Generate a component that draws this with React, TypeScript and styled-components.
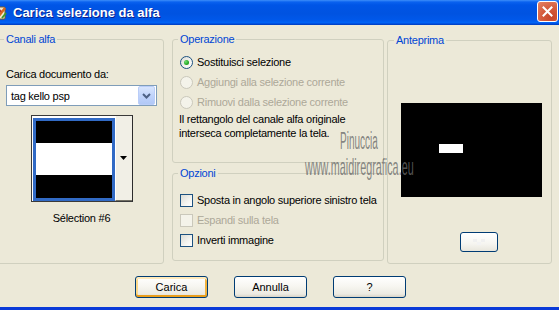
import React from "react";
import styled, { createGlobalStyle } from "styled-components";

const GlobalStyle = createGlobalStyle`
  html, body {
    margin: 0;
    padding: 0;
    background: #ece9d8;
  }
`;

const Window = styled.div`
  position: relative;
  width: 559px;
  height: 310px;
  box-sizing: border-box;
  overflow: hidden;
  display: flex;
  flex-direction: column;
  background: #ece9d8;
  border-bottom: 3px solid #0a3ad8;
  font-family: "Liberation Sans", Arial, sans-serif;
  font-size: 11px;
  letter-spacing: -0.25px;
  color: #000;
`;

const TitleBar = styled.div`
  flex: none;
  height: 25px;
  display: flex;
  align-items: center;
  background: linear-gradient(
    to bottom,
    #3d8ef9 0%,
    #0a62ef 8%,
    #0055e6 20%,
    #0053e1 55%,
    #0058ea 80%,
    #0063f5 90%,
    #004bd8 96%,
    #003ab8 100%
  );
  color: #fff;
`;

const TitleIcon = styled.svg`
  flex: none;
  margin-left: -7px;
  margin-top: 1px;
`;

const TitleText = styled.span`
  flex: 1;
  margin-left: 4px;
  font-weight: bold;
  font-size: 13px;
  letter-spacing: 0;
  text-shadow: 1px 1px 0 #0a1f8c;
`;

const CloseButton = styled.div`
  flex: none;
  align-self: flex-start;
  margin: 1px 1px 0 0;
  width: 21px;
  height: 21px;
  box-sizing: border-box;
  border: 1px solid #fff;
  border-radius: 3px;
  background: radial-gradient(circle at 70% 80%, #c6452a 0%, #d45b3c 45%, #e58466 100%);
  display: flex;
  align-items: center;
  justify-content: center;
`;

const Panels = styled.div`
  display: flex;
  align-items: flex-start;
  padding-top: 8px;
  margin-left: -3px;
`;

const Column = styled.div<{ $gap: number }>`
  display: flex;
  flex-direction: column;
  gap: ${(p) => p.$gap}px;
`;

const Group = styled.fieldset<{ $w: number; $h: number; $pl?: number; $top?: number }>`
  box-sizing: border-box;
  flex: none;
  width: ${(p) => p.$w}px;
  height: ${(p) => p.$h}px;
  min-width: 0;
  margin: ${(p) => p.$top ?? 0}px 0 0 0;
  padding: 0 0 0 ${(p) => p.$pl ?? 7}px;
  border: 1px solid #d0d0bf;
  border-radius: 3px;
`;

const Legend = styled.legend<{ $shift?: number }>`
  height: 13px;
  line-height: 13px;
  padding: 0 2px;
  margin-left: ${(p) => p.$shift ?? -2}px;
  color: #0046d5;
`;

const Spacer = styled.div<{ $h: number }>`
  height: ${(p) => p.$h}px;
  flex: none;
`;

/* left: Canali alfa */

const LeftStack = styled.div`
  width: 151px;
  display: flex;
  flex-direction: column;
  align-items: center;
`;

const FieldLabel = styled.div`
  align-self: flex-start;
  line-height: 13px;
  margin-bottom: 4px;
`;

const Combo = styled.div`
  width: 151px;
  height: 21px;
  box-sizing: border-box;
  border: 1px solid #7f9db9;
  background: #fff;
  display: flex;
  align-items: center;
  padding: 0 1px 0 4px;
`;

const ComboText = styled.span`
  flex: 1;
`;

const ComboArrow = styled.div`
  width: 17px;
  height: 19px;
  box-sizing: border-box;
  border: 1px solid #bacdf8;
  border-radius: 2px;
  background: linear-gradient(to bottom, #d8e5fd 0%, #c1d4fb 50%, #b1c8f7 100%);
  display: flex;
  align-items: center;
  justify-content: center;
`;

const Thumb = styled.div`
  margin-top: 9px;
  width: 102px;
  height: 87px;
  box-sizing: border-box;
  display: flex;
  border: 1px solid #3a3a3a;
  border-right-color: #2c2c2c;
  background: #fff;
  padding: 2px 0 0 1px;
`;

const ThumbImage = styled.div`
  width: 82px;
  height: 83px;
  box-sizing: border-box;
  border: 3px solid #316ac5;
  background: linear-gradient(
    to bottom,
    #000 0 22px,
    #fff 22px 54px,
    #000 54px 100%
  );
`;

const ThumbArrow = styled.div`
  flex: 1;
  margin-top: -2px;
  background: #f1efe6;
  border-left: 1px solid #fff;
  border-bottom: 1px solid #716f64;
  display: flex;
  align-items: center;
  justify-content: center;
`;

const Caption = styled.div`
  margin-top: 10px;
  line-height: 13px;
`;

/* middle: Operazione / Opzioni */

const OptionRow = styled.div<{ $disabled?: boolean }>`
  height: 20px;
  display: flex;
  align-items: center;
  gap: 4px;
  color: ${(p) => (p.$disabled ? "#aca899" : "#000")};
`;

const Radio = styled.span<{ $checked?: boolean; $disabled?: boolean }>`
  flex: none;
  width: 13px;
  height: 13px;
  box-sizing: border-box;
  border-radius: 50%;
  border: 1px solid ${(p) => (p.$disabled ? "#cac8bb" : "#1c5180")};
  background: ${(p) =>
    p.$disabled ? "#f4f3ea" : "linear-gradient(135deg, #dcdcd5 0%, #f4f4f0 60%, #fff 100%)"};
  display: flex;
  align-items: center;
  justify-content: center;

  &::after {
    content: "";
    display: ${(p) => (p.$checked ? "block" : "none")};
    width: 5px;
    height: 5px;
    border-radius: 50%;
    background: radial-gradient(circle at 35% 35%, #6fe06f 0%, #25a825 60%, #178317 100%);
  }
`;

const Check = styled.span<{ $disabled?: boolean }>`
  flex: none;
  width: 13px;
  height: 13px;
  box-sizing: border-box;
  border: 1px solid ${(p) => (p.$disabled ? "#cac8bb" : "#1c5180")};
  background: ${(p) =>
    p.$disabled ? "#f4f3ea" : "linear-gradient(135deg, #dcdcd5 0%, #f4f4f0 60%, #fff 100%)"};
`;

const Description = styled.div`
  margin: 0 0 0 -1px;
  line-height: 14px;
`;

/* right: Anteprima */

const Preview = styled.div`
  width: 141px;
  height: 94px;
  box-sizing: border-box;
  background: #000;
  padding: 41px 0 0 38px;
`;

const PreviewMark = styled.div`
  width: 24px;
  height: 9px;
  background: #fff;
`;

const SmallButton = styled.div`
  margin-left: 59px;
  width: 38px;
  height: 20px;
  box-sizing: border-box;
  border: 1px solid #003c74;
  border-radius: 3px;
  background: linear-gradient(to bottom, #fff 0%, #f6f5f0 60%, #e8e6dc 100%);
  display: flex;
  align-items: center;
  justify-content: center;
`;

/* bottom buttons */

const ButtonRow = styled.div`
  display: flex;
  gap: 26px;
  padding: 12px 0 0 135px;
`;

const Button = styled.div<{ $default?: boolean }>`
  width: 73px;
  height: 22px;
  box-sizing: border-box;
  border: 1px solid #003c74;
  border-radius: 3px;
  background: linear-gradient(to bottom, #fff 0%, #f7f6f1 45%, #eceae2 85%, #d8d3c6 100%);
  box-shadow: ${(p) =>
    p.$default
      ? "inset 0 2px 0 #ffeabb, inset 0 -2px 0 #e89d1b, inset 2px 0 0 #fbd88a, inset -2px 0 0 #f2b33e"
      : "none"};
  display: flex;
  align-items: center;
  justify-content: center;
  letter-spacing: 0;
`;

/* watermark over the dialog */

const Watermark = styled.div`
  position: absolute;
  left: 300px;
  top: 128px;
  width: 130px;
  color: rgba(105, 105, 105, 0.8);
  font-family: "Liberation Sans Narrow", "Liberation Sans", sans-serif;
  letter-spacing: 0;
  pointer-events: none;
`;

const WatermarkLine = styled.div<{ $size: number; $sx: number; $sy: number; $indent: number }>`
  font-size: ${(p) => p.$size}px;
  line-height: ${(p) => p.$size + 7}px;
  margin-left: ${(p) => p.$indent}px;
  transform: scale(${(p) => p.$sx}, ${(p) => p.$sy});
  transform-origin: left center;
  white-space: nowrap;
`;

function ChevronDown() {
  return (
    <svg width="9" height="6" viewBox="0 0 9 6">
      <path d="M1 1 L4.5 4.5 L8 1" fill="none" stroke="#4d6185" strokeWidth="2" />
    </svg>
  );
}

export default function App() {
  return (
    <>
      <GlobalStyle />
      <Window>
        <TitleBar>
          <TitleIcon width="16" height="16" viewBox="0 0 16 16">
            <rect x="3" y="2" width="9" height="12" rx="1" fill="#f4ecd0" stroke="#7a5a2a" />
            <path d="M5 12 L12 3" stroke="#d8681c" strokeWidth="2.5" />
            <path d="M9 13 L13 8" stroke="#3c9a2c" strokeWidth="2" />
            <circle cx="7" cy="6" r="1.5" fill="#c0392b" />
          </TitleIcon>
          <TitleText>Carica selezione da alfa</TitleText>
          <CloseButton>
            <svg width="11" height="11" viewBox="0 0 11 11">
              <path d="M1.5 1.5 L9.5 9.5 M9.5 1.5 L1.5 9.5" stroke="#fff" strokeWidth="2" strokeLinecap="square" />
            </svg>
          </CloseButton>
        </TitleBar>

        <Panels>
          <Group $w={167} $h={231} $pl={8}>
            <Legend>Canali alfa</Legend>
            <Spacer $h={22} />
            <LeftStack>
              <FieldLabel>Carica documento da:</FieldLabel>
              <Combo>
                <ComboText>tag kello psp</ComboText>
                <ComboArrow>
                  <ChevronDown />
                </ComboArrow>
              </Combo>
              <Thumb>
                <ThumbImage />
                <ThumbArrow>
                  <svg width="7" height="4" viewBox="0 0 7 4">
                    <path d="M0 0 H7 L3.5 4 Z" fill="#000" />
                  </svg>
                </ThumbArrow>
              </Thumb>
              <Caption>Sélection #6</Caption>
            </LeftStack>
          </Group>

          <Column $gap={4} style={{ marginLeft: 8 }}>
            <Group $w={212} $h={130}>
              <Legend>Operazione</Legend>
              <Spacer $h={6} />
              <OptionRow>
                <Radio $checked />
                Sostituisci selezione
              </OptionRow>
              <OptionRow $disabled>
                <Radio $disabled />
                Aggiungi alla selezione corrente
              </OptionRow>
              <OptionRow $disabled>
                <Radio $disabled />
                Rimuovi dalla selezione corrente
              </OptionRow>
              <Description>
                Il rettangolo del canale alfa originale
                <br />
                interseca completamente la tela.
              </Description>
            </Group>
            <Group $w={212} $h={94}>
              <Legend>Opzioni</Legend>
              <Spacer $h={10} />
              <OptionRow>
                <Check />
                Sposta in angolo superiore sinistro tela
              </OptionRow>
              <OptionRow $disabled>
                <Check $disabled />
                Espandi sulla tela
              </OptionRow>
              <OptionRow>
                <Check />
                Inverti immagine
              </OptionRow>
            </Group>
          </Column>

          <Group $w={165} $h={230} $pl={13} $top={1} style={{ marginLeft: 3 }}>
            <Legend $shift={-7}>Anteprima</Legend>
            <Spacer $h={56} />
            <Preview>
              <PreviewMark />
            </Preview>
            <Spacer $h={35} />
            <SmallButton>
              <svg width="16" height="8" viewBox="0 0 16 8">
                <rect x="2" y="1" width="4" height="3" fill="#f0f0f0" />
                <rect x="10" y="1" width="4" height="3" fill="#f0f0f0" />
                <rect x="6" y="4" width="4" height="3" fill="#f3f3f3" />
              </svg>
            </SmallButton>
          </Group>
        </Panels>

        <ButtonRow>
          <Button $default>Carica</Button>
          <Button>Annulla</Button>
          <Button>?</Button>
        </ButtonRow>

        <Watermark>
          <WatermarkLine $size={20} $sx={0.5} $sy={1.15} $indent={40}>
            Pinuccia
          </WatermarkLine>
          <WatermarkLine $size={18} $sx={0.6} $sy={1.3} $indent={5}>
            www.maidiregrafica.eu
          </WatermarkLine>
        </Watermark>
      </Window>
    </>
  );
}
